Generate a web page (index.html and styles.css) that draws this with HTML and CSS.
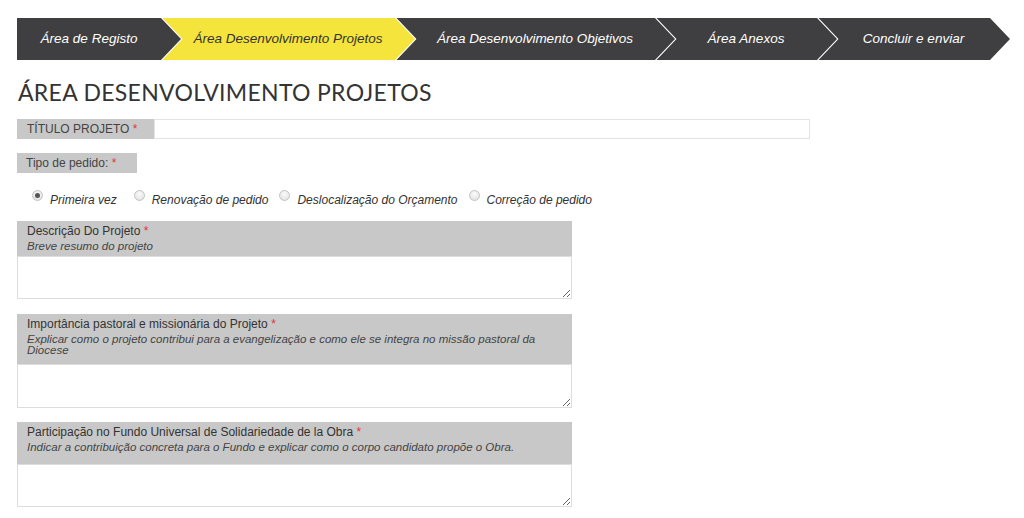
FILE: index.html
```html
<!DOCTYPE html>
<html lang="pt">
<head>
<meta charset="utf-8">
<title>Área Desenvolvimento Projetos</title>
<link rel="stylesheet" href="styles.css">
</head>
<body>
<nav class="steps">
  <div class="step step-first step-1">Área de Registo</div>
  <div class="step step-active step-2">Área Desenvolvimento Projetos</div>
  <div class="step step-3">Área Desenvolvimento Objetivos</div>
  <div class="step step-4">Área Anexos</div>
  <div class="step step-5">Concluir e enviar</div>
</nav>

<h1 class="page-title">ÁREA DESENVOLVIMENTO PROJETOS</h1>

<form class="form">
  <div class="title-row">
    <label class="label-box label-title">TÍTULO PROJETO <span class="req">*</span></label>
    <input class="title-input" type="text">
  </div>

  <div class="label-box label-tipo">Tipo de pedido: <span class="req">*</span></div>

  <div class="radios">
    <div class="radio-item radio-item-first"><span class="radio checked"></span>Primeira vez</div>
    <div class="radio-item"><span class="radio"></span>Renovação de pedido</div>
    <div class="radio-item"><span class="radio"></span>Deslocalização do Orçamento</div>
    <div class="radio-item"><span class="radio"></span>Correção de pedido</div>
  </div>

  <div class="field field-first">
    <div class="field-head head-sm">
      <div class="field-label">Descrição Do Projeto <span class="req">*</span></div>
      <div class="field-sub">Breve resumo do projeto</div>
    </div>
    <textarea class="field-input"></textarea>
  </div>

  <div class="field">
    <div class="field-head head-lg">
      <div class="field-label">Importância pastoral e missionária do Projeto <span class="req">*</span></div>
      <div class="field-sub">Explicar como o projeto contribui para a evangelização e como ele se integra no missão pastoral da Diocese</div>
    </div>
    <textarea class="field-input field-input-lg"></textarea>
  </div>

  <div class="field field-last">
    <div class="field-head head-md">
      <div class="field-label">Participação no Fundo Universal de Solidariedade de la Obra <span class="req">*</span></div>
      <div class="field-sub">Indicar a contribuição concreta para o Fundo e explicar como o corpo candidato propõe o Obra.</div>
    </div>
    <textarea class="field-input"></textarea>
  </div>
</form>
</body>
</html>
```

FILE: styles.css
```css
html, body {
  margin: 0;
  padding: 0;
  background: #ffffff;
}

body {
  font-family: "Liberation Sans", Arial, sans-serif;
  color: #333333;
}

/* ---------- step navigation ---------- */
.steps {
  display: flex;
  height: 42px;
  margin: 18px 0 0 17px;
  background: #ffffff;
}

.step {
  height: 42px;
  box-sizing: border-box;
  display: flex;
  align-items: center;
  justify-content: center;
  padding: 0 20px 1px;
  margin-left: -20px;
  background: #3f3f41;
  color: #ffffff;
  font: italic 13.5px "Liberation Sans", Arial, sans-serif;
  white-space: nowrap;
  clip-path: polygon(1.5px 0, calc(100% - 20px) 0, 100% 50%, calc(100% - 20px) 100%, 1.5px 100%, 21.5px 50%);
}

.step-first {
  margin-left: 0;
  padding-left: 0;
  clip-path: polygon(0 0, calc(100% - 20px) 0, 100% 50%, calc(100% - 20px) 100%, 0 100%);
}

.step-active {
  background: #f5e43c;
  color: #333333;
}

.step-1 { width: 164px; }
.step-2 { width: 254px; }
.step-3 { width: 280px; }
.step-4 { width: 182px; }
.step-5 { width: 193px; }

/* ---------- heading ---------- */
.page-title {
  margin: 18px 0 13px 18px;
  font: 400 23px/28px Lato, "Liberation Sans", sans-serif;
  letter-spacing: 0.3px;
  color: #333333;
}

/* ---------- form ---------- */
.form {
  margin: 0 0 0 17px;
}

.req {
  color: #e0353b;
}

.title-row {
  display: flex;
  width: 793px;
  height: 20px;
}

.label-box {
  box-sizing: border-box;
  height: 20px;
  background: #c8c8c8;
  color: #444444;
  font: 12px/20px "Liberation Sans", Arial, sans-serif;
  padding-left: 10px;
}

.label-title {
  width: 137px;
  flex: none;
}

.title-input {
  flex: 1;
  height: 20px;
  box-sizing: border-box;
  margin: 0;
  padding: 0 4px;
  border: 1px solid #e3e3e3;
  background: #ffffff;
  outline: none;
}

.label-tipo {
  width: 120px;
  margin-top: 14px;
  padding-left: 9px;
}

.radios {
  display: flex;
  align-items: center;
  height: 18px;
  margin-top: 18px;
  padding-left: 15px;
  gap: 11px;
}

.radio-item {
  display: flex;
  align-items: center;
  font: italic 12px/18px "Liberation Sans", Arial, sans-serif;
  color: #333333;
}

.radio-item-first {
  margin-right: 6px;
}

.radio {
  position: relative;
  top: -5px;
  width: 9px;
  height: 9px;
  margin-right: 7px;
  border-radius: 50%;
  border: 1px solid #c4c4c4;
  background: radial-gradient(circle at 50% 35%, #fbfbfb 0, #e6e6e6 70%, #d6d6d6 100%);
}

.radio.checked::after {
  content: "";
  position: absolute;
  left: 2px;
  top: 2px;
  width: 5px;
  height: 5px;
  border-radius: 50%;
  background: #555555;
}

.field {
  width: 555px;
  margin-top: 15px;
}

.field-first {
  margin-top: 12px;
}

.field-last {
  margin-top: 14px;
}

.field-head {
  box-sizing: border-box;
  background: #c8c8c8;
  padding: 3px 10px 0;
}

.head-sm { height: 35px; }
.head-lg { height: 50px; }
.head-md { height: 42px; }

.field-label {
  font: 12px/14px "Liberation Sans", Arial, sans-serif;
  color: #333333;
}

.field-sub {
  margin-top: 3px;
  font: italic 11.5px/11px "Liberation Sans", Arial, sans-serif;
  color: #444444;
}

.field-input {
  display: block;
  width: 100%;
  height: 43px;
  box-sizing: border-box;
  margin: 0;
  border: 1px solid #dddddd;
  background: #ffffff;
  resize: vertical;
  outline: none;
}

.field-input-lg {
  height: 44px;
}
```
